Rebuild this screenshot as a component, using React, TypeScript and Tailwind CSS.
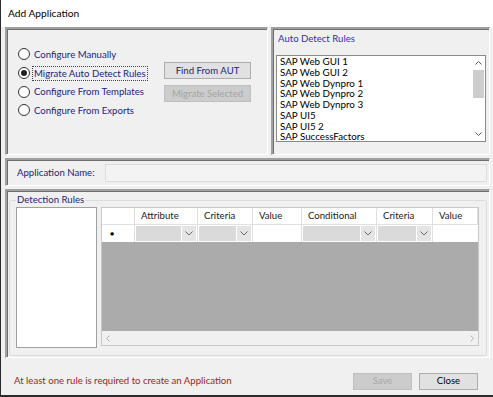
import React from "react";

const font = { fontFamily: 'Lato, "Noto Sans", sans-serif' };

function Radio({ label, checked, focus }: { label: string; checked?: boolean; focus?: boolean }) {
  return (
    <div className="flex items-center h-[18.7px] whitespace-nowrap">
      <div className="w-[12px] h-[12px] rounded-full border border-[#333] bg-white flex items-center justify-center shrink-0">
        {checked && <div className="w-[6px] h-[6px] rounded-full bg-[#222]" />}
      </div>
      <span
        className={
          "ml-[3px] px-[1px] text-[9.6px] leading-[13px] text-[#23237f] " +
          (focus ? "outline outline-1 outline-dotted outline-[#444]" : "")
        }
      >
        {label}
      </span>
    </div>
  );
}

function Chevron() {
  return (
    <svg width="8" height="5" viewBox="0 0 8 5" className="block">
      <path d="M0.5 0.5 L4 4 L7.5 0.5" fill="none" stroke="#6a6a6a" strokeWidth="1" />
    </svg>
  );
}

function ComboCell({ w }: { w: string }) {
  return (
    <div className={"h-full border-r border-[#e0e0e0] bg-white p-[1px] flex " + w}>
      <div className="flex-1 bg-[#dadada]" />
      <div className="w-[14px] ml-[1px] bg-[#e4e4e4] flex items-center justify-center">
        <Chevron />
      </div>
    </div>
  );
}

export default function App() {
  const cols = [
    { w: "w-[33px]", t: "" },
    { w: "w-[63px]", t: "Attribute" },
    { w: "w-[55px]", t: "Criteria" },
    { w: "w-[49px]", t: "Value" },
    { w: "w-[75px]", t: "Conditional" },
    { w: "w-[56px]", t: "Criteria" },
    { w: "w-[45px]", t: "Value" },
  ];
  const items = [
    "SAP Web GUI 1",
    "SAP Web GUI 2",
    "SAP Web Dynpro 1",
    "SAP Web Dynpro 2",
    "SAP Web Dynpro 3",
    "SAP UI5",
    "SAP UI5 2",
    "SAP SuccessFactors",
  ];
  const panel =
    "border-t-2 border-l-2 border-t-[#a0a0a0] border-l-[#a0a0a0] border-r border-b border-r-white border-b-white shadow-[inset_1px_1px_0_#6e6e6e]";
  return (
    <div
      style={font}
      className="w-[493px] h-[397px] bg-[#f0f0f0] border-l border-b-2 border-[#2b2b2b] flex flex-col overflow-hidden text-black"
    >
      {/* title bar */}
      <div className="h-[27px] bg-white flex items-center pl-[7px] text-[10.2px] shrink-0">Add Application</div>

      <div className="flex flex-col pl-[4px] pr-[3px]">
        {/* top row */}
        <div className="flex h-[128px] gap-[3px]">
          <div className={"w-[263px] " + panel + " flex pl-[11px] pt-[16px]"}>
            <div className="flex flex-col w-[138px]">
              <Radio label="Configure Manually" />
              <Radio label="Migrate Auto Detect Rules" checked focus />
              <Radio label="Configure From Templates" />
              <Radio label="Configure From Exports" />
            </div>
            <div className="flex flex-col ml-[8px] pt-[17px] gap-[6px]">
              <button className="w-[87px] h-[17px] bg-[#e1e1e1] border border-[#adadad] text-[9.6px] leading-none text-[#23237f]">
                Find From AUT
              </button>
              <button className="w-[87px] h-[17px] bg-[#cccccc] border border-[#bfbfbf] text-[9.6px] leading-none text-[#a4a4a4]">
                Migrate Selected
              </button>
            </div>
          </div>
          <div className={"flex-1 " + panel + " pl-[3px] pr-[3px]"}>
            <div className="text-[9.6px] leading-[12px] text-[#3030b0] h-[26px] pl-[2px] pt-[4px]">Auto Detect Rules</div>
            <div className="h-[87px] bg-white border border-[#8a8a8a] flex">
              <div className="flex-1 pl-[3px] flex flex-col">
                {items.map((i) => (
                  <div key={i} className="text-[9.8px] leading-[10.75px] whitespace-nowrap">
                    {i}
                  </div>
                ))}
              </div>
              <div className="w-[12px] flex flex-col items-center mr-[1px]">
                <div className="h-[14px] flex items-center justify-center">
                  <svg width="7" height="4" viewBox="0 0 7 4">
                    <path d="M0.5 3.5 L3.5 0.5 L6.5 3.5" fill="none" stroke="#555" strokeWidth="1" />
                  </svg>
                </div>
                <div className="w-[11px] h-[28px] bg-[#cdcdcd]" />
                <div className="flex-1" />
                <div className="h-[14px] flex items-center justify-center">
                  <svg width="7" height="4" viewBox="0 0 7 4">
                    <path d="M0.5 0.5 L3.5 3.5 L6.5 0.5" fill="none" stroke="#555" strokeWidth="1" />
                  </svg>
                </div>
              </div>
            </div>
          </div>
        </div>

        {/* application name */}
        <div className={"mt-[3px] h-[28px] " + panel + " flex items-center pl-[10px] pr-[2px]"}>
          <span className="text-[9.6px] text-[#23237f] w-[88px] whitespace-nowrap pt-[1px]">Application Name:</span>
          <div className="flex-1 h-[18px] border border-[#dcdcdc] bg-[#f3f3f3]" />
        </div>

        {/* detection rules */}
        <div className={"mt-[3px] h-[169px] " + panel + " pl-[2px] pr-[2px] pb-[4px]"}>
          <fieldset className="h-full border border-[#dcdcdc] rounded-[2px] px-[6px] pb-[4px] mt-[3px] pt-[1px] flex">
            <legend className="text-[9.6px] text-[#23237f] ml-0 px-[1px] leading-[12px]">Detection Rules</legend>
            <div className="w-[81px] h-[141px] bg-white border border-[#a0a0a0]" />
            <div className="ml-[4px] w-[378px] h-[139px] border border-[#c8c8c8] bg-[#ababab] flex flex-col">
              <div className="h-[17px] flex bg-white border-b border-[#e0e0e0]">
                {cols.map((c, i) => (
                  <div
                    key={i}
                    className={
                      c.w + " h-full border-r border-[#e0e0e0] text-[9.6px] flex items-center pl-[6px] text-[#222]"
                    }
                  >
                    {c.t}
                  </div>
                ))}
              </div>
              <div className="h-[17px] flex bg-white">
                <div className="w-[33px] h-full border-r border-[#e0e0e0] flex items-center pl-[8px] text-[7px]">
                  ●
                </div>
                <ComboCell w="w-[63px]" />
                <ComboCell w="w-[55px]" />
                <div className="w-[49px] h-full border-r border-[#e0e0e0] bg-white" />
                <ComboCell w="w-[75px]" />
                <ComboCell w="w-[56px]" />
                <div className="w-[45px] h-full bg-white" />
              </div>
              <div className="flex-1" />
              <div className="h-[14px] bg-[#f0f0f0] flex items-center justify-between px-[4px] text-[#a0a0a0]">
                <svg width="4" height="7" viewBox="0 0 4 7">
                  <path d="M3.5 0.5 L0.5 3.5 L3.5 6.5" fill="none" stroke="#b0b0b0" strokeWidth="1" />
                </svg>
                <svg width="4" height="7" viewBox="0 0 4 7">
                  <path d="M0.5 0.5 L3.5 3.5 L0.5 6.5" fill="none" stroke="#b0b0b0" strokeWidth="1" />
                </svg>
              </div>
            </div>
          </fieldset>
        </div>
      </div>

      {/* footer */}
      <div className="flex-1 flex items-center pl-[13px] pr-[15px] pt-[9px]">
        <span className="text-[9.6px] text-[#a12323] flex-1">At least one rule is required to create an Application</span>
        <button className="w-[59px] h-[17px] bg-[#cccccc] border border-[#bfbfbf] text-[9.6px] text-[#a8a8a8] leading-none">
          Save
        </button>
        <button className="ml-[7px] w-[59px] h-[17px] bg-[#e1e1e1] border border-[#adadad] text-[9.6px] leading-none">
          Close
        </button>
      </div>
    </div>
  );
}
